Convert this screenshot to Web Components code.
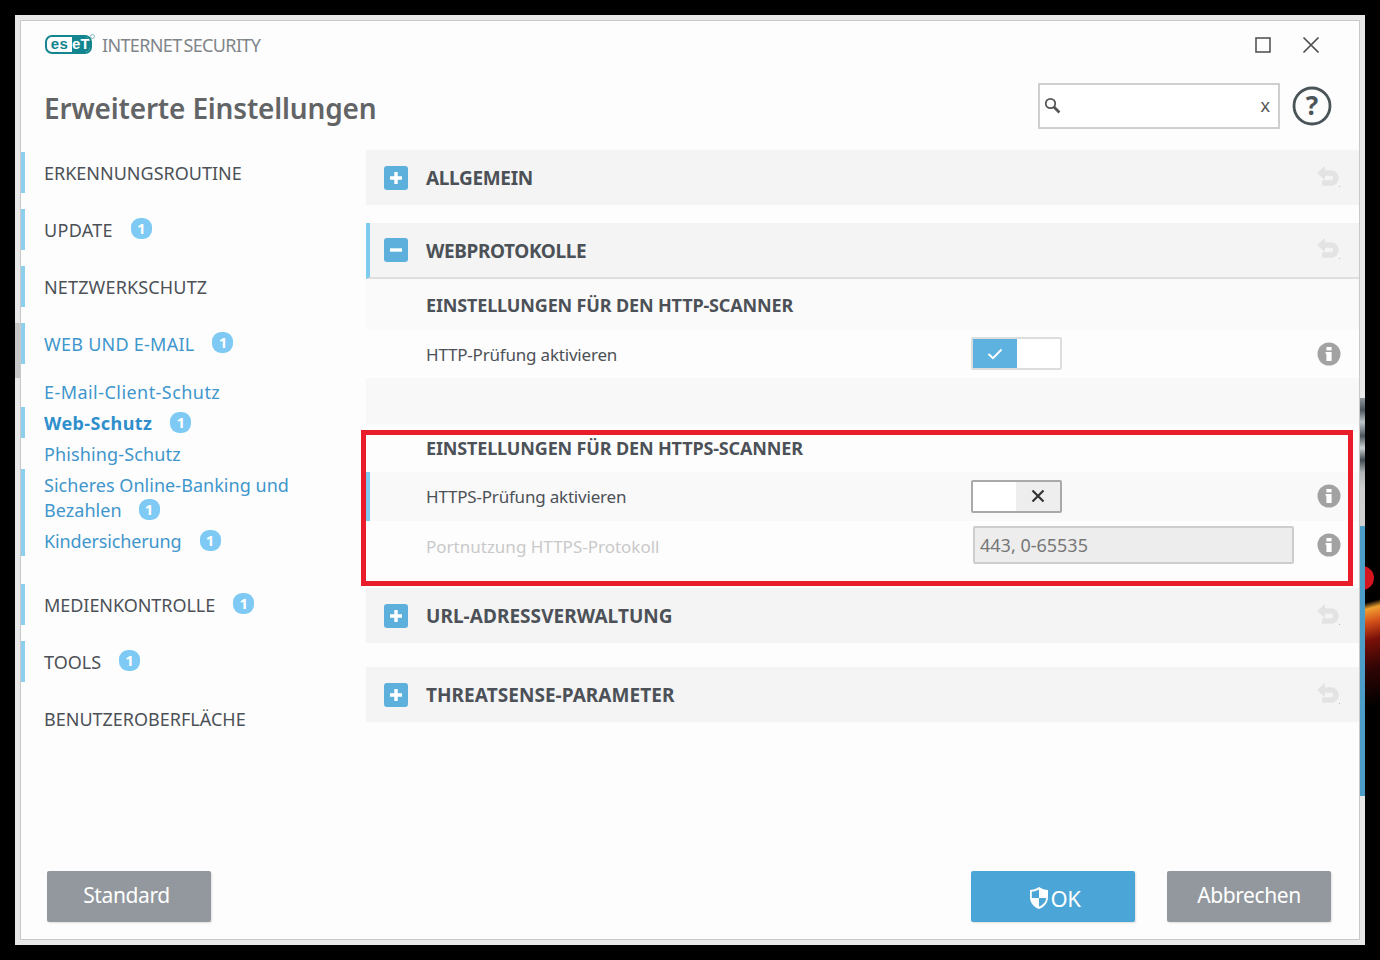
<!DOCTYPE html>
<html lang="de">
<head>
<meta charset="utf-8">
<title>ESET Internet Security</title>
<style>
  html, body { margin: 0; padding: 0; background: #000; }
  body { font-family: "Noto Sans", "Open Sans", sans-serif; }
</style>
</head>
<body>
<app-screen>
  <eset-window>
    <title-bar slot="top"></title-bar>
    <page-head slot="top">Erweiterte Einstellungen</page-head>

    <side-nav slot="nav">
      <nav-item marked>ERKENNUNGSROUTINE</nav-item>
      <nav-item marked count="1" style="letter-spacing:.3px">UPDATE</nav-item>
      <nav-item marked style="letter-spacing:.15px">NETZWERKSCHUTZ</nav-item>
      <nav-item marked active count="1" style="letter-spacing:.25px">WEB UND E-MAIL</nav-item>
      <sub-list>
        <sub-item style="letter-spacing:.45px">E-Mail-Client-Schutz</sub-item>
        <sub-item marked current count="1" style="letter-spacing:.4px">Web-Schutz</sub-item>
        <sub-item style="letter-spacing:.13px">Phishing-Schutz</sub-item>
        <sub-item marked count="1" class="wrap" style="letter-spacing:.04px">Sicheres Online-Banking und<br>Bezahlen</sub-item>
        <sub-item marked count="1" style="letter-spacing:-.13px">Kindersicherung</sub-item>
      </sub-list>
      <nav-item marked count="1" style="letter-spacing:-.05px">MEDIENKONTROLLE</nav-item>
      <nav-item marked count="1">TOOLS</nav-item>
      <nav-item>BENUTZEROBERFLÄCHE</nav-item>
    </side-nav>

    <settings-pane slot="pane">
      <section-bar style="letter-spacing:-.33px">ALLGEMEIN</section-bar>
      <section-bar open style="letter-spacing:-.38px">WEBPROTOKOLLE</section-bar>
      <group-title size="51" tone="#fafafa">EINSTELLUNGEN FÜR DEN HTTP-SCANNER</group-title>
      <setting-row height="48" tone="#fdfdfd" info style="letter-spacing:-.2px">
        HTTP-Prüfung aktivieren
        <toggle-switch slot="control" on></toggle-switch>
      </setting-row>
      <setting-row height="46" tone="#f8f8f8"></setting-row>
      <group-title size="48" tone="#fdfdfd">EINSTELLUNGEN FÜR DEN HTTPS-SCANNER</group-title>
      <setting-row height="49" tone="#f9f9f9" marked info style="letter-spacing:-.2px">
        HTTPS-Prüfung aktivieren
        <toggle-switch slot="control"></toggle-switch>
      </setting-row>
      <setting-row height="49" tone="#fdfdfd" disabled info>
        Portnutzung HTTPS-Protokoll
        <port-field slot="control">443, 0-65535</port-field>
      </setting-row>
      <section-bar class="after-frame" style="letter-spacing:.05px">URL-ADRESSVERWALTUNG</section-bar>
      <section-bar style="letter-spacing:.05px">THREATSENSE-PARAMETER</section-bar>
      <red-frame></red-frame>
    </settings-pane>

    <action-button slot="left" tone="grey" style="padding-right:5px">Standard</action-button>
    <action-button slot="right" tone="blue" shield>OK</action-button>
    <action-button slot="right" tone="grey">Abbrechen</action-button>
  </eset-window>
</app-screen>

<script>
  function attach(el, html) {
    const root = el.attachShadow({ mode: 'open' });
    root.innerHTML = html;
    return root;
  }

  class AppScreen extends HTMLElement {
    constructor() {
      super();
      attach(this, `
        <style>
          :host { display: block; position: relative; width: 1380px; height: 960px; padding: 15px; box-sizing: border-box; background: #000; overflow: hidden; }
          .shell { width: 1350px; height: 930px; box-sizing: border-box; padding: 5px; background: #e8e8e8; }
          /* bits of the desktop that show around the window */
          .bit { position: absolute; }
          .left { left: 15px; top: 323px; width: 5px; height: 55px; background: #c6c6c6; }
          .photo { left: 1360px; top: 398px; width: 5px; height: 128px;
            background: linear-gradient(#8f979c 0, #4a545b 12px, #bfc6ca 24px, #4a545b 38px, #cdd2d5 50px, #3f4a50 62px, #aeb3b6 74px, #cfcfcf 90px, #d2d2d2 100%); }
          .blue { left: 1360px; top: 526px; width: 5px; height: 270px; background: #4c9dc8; }
          .dot { left: 1350px; top: 566px; width: 24px; height: 24px; border-radius: 50%; background: #d3151e; clip-path: inset(0 0 0 15px); }
          .glow { left: 1365px; top: 596px; width: 15px; height: 110px;
            background: linear-gradient(165deg, #000 0, #000 6%, #f0a030 12%, #d4501a 24%, #7a0f08 40%, #300504 65%, #000 100%); }
        </style>
        <div class="shell"><slot></slot></div>
        <i class="bit left"></i><i class="bit photo"></i><i class="bit blue"></i><i class="bit dot"></i><i class="bit glow"></i>`);
    }
  }

  class EsetWindow extends HTMLElement {
    constructor() {
      super();
      attach(this, `
        <style>
          :host { display: flex; flex-direction: column; height: 100%; box-sizing: border-box; border: 1px solid #c9c9c9; background: #fdfdfd; color: #4c5157; }
          .top { height: 129px; display: block; flex: none; }
          .main { display: flex; height: 721px; flex: none; }
          .foot { display: flex; justify-content: space-between; padding: 0 28px 0 26px; }
          .right { display: flex; gap: 32px; }
        </style>
        <div class="top"><slot name="top"></slot></div>
        <div class="main"><slot name="nav"></slot><slot name="pane"></slot></div>
        <div class="foot">
          <div><slot name="left"></slot></div>
          <div class="right"><slot name="right"></slot></div>
        </div>`);
    }
  }

  class TitleBar extends HTMLElement {
    constructor() {
      super();
      attach(this, `
        <style>
          :host { display: flex; align-items: center; height: 48px; padding: 0 39px 0 24px; box-sizing: border-box; }
          .logo { display: flex; width: 47px; height: 19px; box-sizing: border-box; border: 2.5px solid #12858f; border-radius: 7px; overflow: hidden; font: bold 15px/13px "Liberation Sans", sans-serif; margin-top: -1px; }
          .logo b { display: block; text-align: center; letter-spacing: .3px; }
          .es { width: 25px; color: #12858f; }
          .et { flex: 1; background: #12858f; color: #fff; }
          .reg { width: 3px; height: 3px; border: 1px solid #7fb9be; border-radius: 50%; margin: -18px 0 0 -2px; }
          .name { margin-left: 7px; font-size: 18px; letter-spacing: -.65px; word-spacing: -2px; color: #808589; line-height: 24px; }
          .spacer { flex: 1; }
          svg { display: block; }
          .close { margin-left: 31px; }
        </style>
        <div class="logo"><b class="es">es</b><b class="et">eT</b></div><i class="reg"></i>
        <span class="name">INTERNET SECURITY</span>
        <span class="spacer"></span>
        <svg width="16" height="16" viewBox="0 0 16 16"><rect x="1" y="1" width="14" height="14" fill="none" stroke="#555" stroke-width="1.6"/></svg>
        <svg class="close" width="18" height="18" viewBox="0 0 18 18"><path d="M1.5 1.500l15 15M16.500 1.500l-15 15" fill="none" stroke="#4f4f4f" stroke-width="1.7"/></svg>`);
    }
  }

  class PageHead extends HTMLElement {
    constructor() {
      super();
      attach(this, `
        <style>
          :host { display: flex; align-items: center; height: 81px; padding: 0 27px 8px 23px; box-sizing: border-box; }
          h1 { flex: 1; margin: 4px 0 0 0; font-size: 28px; line-height: 38px; font-weight: 600; letter-spacing: -.17px; color: #626466; }
          .search { display: flex; align-items: center; justify-content: space-between; width: 242px; height: 46px; box-sizing: border-box; border: 2px solid #cfcfcf; background: #fff; padding: 0 8px 0 4px; }
          .help { margin-left: 12px; }
          svg { display: block; }
          .clear { font: 19px/20px "Liberation Sans", sans-serif; color: #555; }
        </style>
        <h1><slot></slot></h1>
        <div class="search">
          <svg width="17" height="17" viewBox="0 0 17 17"><circle cx="6.500" cy="6.500" r="4.700" fill="none" stroke="#555" stroke-width="1.800"/><path d="M10 10l5.400 5.400" stroke="#555" stroke-width="2.800"/></svg>
          <span class="clear">x</span>
        </div>
        <svg class="help" width="40" height="40" viewBox="0 0 40 40">
          <circle cx="20" cy="20" r="18" fill="none" stroke="#4a5459" stroke-width="2.800"/>
          <text x="20" y="29" text-anchor="middle" font-family="Noto Sans, sans-serif" font-size="26" font-weight="700" fill="#4a5459">?</text>
        </svg>`);
    }
  }

  class SideNav extends HTMLElement {
    constructor() {
      super();
      attach(this, `
        <style>
          :host { display: flex; flex-direction: column; gap: 16px; width: 345px; flex: none; padding-top: 2px; box-sizing: border-box; }
        </style>
        <slot></slot>`);
    }
  }

  class CountBadge extends HTMLElement {
    constructor() {
      super();
      attach(this, `
        <style>
          :host { display: inline-flex; align-items: center; justify-content: center; width: 21px; height: 21px; border-radius: 9px; background: #7fcaf4; color: #fff; font-size: 15px; font-weight: 700; line-height: 21px; letter-spacing: 0; }
        </style>
        <slot></slot>`);
    }
  }
  customElements.define('count-badge', CountBadge);

  const badge = el => el.hasAttribute('count') ? `<count-badge>${el.getAttribute('count')}</count-badge>` : '';

  class NavItem extends HTMLElement {
    connectedCallback() {
      if (this.shadowRoot) return;
      const colour = this.hasAttribute('active') ? '#3f96cc' : '#4c5157';
      attach(this, `
        <style>
          :host { display: flex; align-items: center; height: 41px; box-sizing: border-box; padding-left: 19px; border-left: 4px solid transparent; font-size: 18px; color: ${colour}; }
          :host([marked]) { border-left-color: #8dcfec; }
          count-badge { margin: -3px 0 0 18px; }
        </style>
        <slot></slot>${badge(this)}`);
    }
  }

  class SubList extends HTMLElement {
    constructor() {
      super();
      attach(this, `
        <style>
          :host { display: flex; flex-direction: column; margin: -4px 0 12px; }
        </style>
        <slot></slot>`);
    }
  }

  class SubItem extends HTMLElement {
    connectedCallback() {
      if (this.shadowRoot) return;
      attach(this, `
        <style>
          :host { display: flex; align-items: center; min-height: 31px; box-sizing: border-box; padding-left: 19px; padding-top: 2px; border-left: 4px solid transparent; font-size: 18px; line-height: 25px; color: #3f96cc; }
          :host([marked]) { border-left-color: #8dcfec; }
          :host([current]) { font-weight: 700; color: #2f8fcc; }
          :host(.wrap) { display: block; padding-top: 4px; padding-bottom: 2px; height: 56px; }
          :host(.wrap) count-badge { margin-left: 17px; vertical-align: 2px; }
          count-badge { margin-left: 18px; margin-top: -3px; }
        </style>
        <slot></slot>${badge(this)}`);
    }
  }

  class SettingsPane extends HTMLElement {
    constructor() {
      super();
      attach(this, `
        <style>
          :host { display: flex; flex-direction: column; position: relative; width: 993px; flex: none; }
        </style>
        <slot></slot>`);
    }
  }

  const undoIcon = `<svg class="undo" width="24" height="22" viewBox="0 0 24 22"><path d="M6 7h8a5 5 0 0 1 0 10H5" fill="none" stroke="#e3e3e3" stroke-width="5.500"/><path d="M0 7l8-7v14z" fill="#e3e3e3"/><rect x="22" y="20" width="1" height="1" fill="#bbb"/></svg>`;

  class SectionBar extends HTMLElement {
    connectedCallback() {
      if (this.shadowRoot) return;
      const open = this.hasAttribute('open');
      const mark = open ? 'M6 12h12' : 'M6 12h12M12 6v12';
      attach(this, `
        <style>
          :host { display: flex; align-items: center; height: 55px; box-sizing: border-box; padding: 0 18px 0 18px; background: #f4f4f4; font-size: 19px; font-weight: 700; color: #4c5157; margin-bottom: 18px; }
          :host([open]) { height: 56px; padding-left: 14px; border-left: 4px solid #7dcbee; border-bottom: 2px solid #dedede; margin-bottom: 0; }
          :host([open]) span { margin-top: 1px; }
          :host(.after-frame) { margin-top: 18px; margin-bottom: 24px; }
          .box { display: block; margin-right: 18px; flex: none; }
          span { flex: 1; }
          .undo { display: block; margin-top: -2px; }
        </style>
        <svg class="box" width="24" height="24" viewBox="0 0 24 24"><rect width="24" height="24" rx="3" fill="#5db0dc"/><path d="${mark}" stroke="#fff" stroke-width="3.400" fill="none"/></svg>
        <span><slot></slot></span>${undoIcon}`);
    }
  }

  class GroupTitle extends HTMLElement {
    connectedCallback() {
      if (this.shadowRoot) return;
      attach(this, `
        <style>
          :host { display: flex; align-items: center; height: ${this.getAttribute('size')}px; padding-left: 60px; background: ${this.getAttribute('tone')}; font-size: 18px; font-weight: 700; letter-spacing: -.15px; color: #4c5157; }
        </style>
        <slot></slot>`);
    }
  }

  class SettingRow extends HTMLElement {
    connectedCallback() {
      if (this.shadowRoot) return;
      const info = this.hasAttribute('info') ? `
        <svg class="info" width="24" height="24" viewBox="0 0 24 24"><circle cx="12" cy="12" r="11.500" fill="#a2a2a2"/><rect x="9.400" y="10" width="5.200" height="9" fill="#fff"/><rect x="8.600" y="10" width="2" height="1.800" fill="#fff"/><rect x="9.400" y="5" width="5.200" height="3.400" fill="#fff"/></svg>` : '';
      attach(this, `
        <style>
          :host { display: flex; align-items: center; height: ${this.getAttribute('height')}px; box-sizing: border-box; padding: 0 18px 0 60px; background: ${this.getAttribute('tone')}; font-size: 17px; color: #4c5157; }
          :host([marked]) { padding-left: 56px; border-left: 4px solid #7dcbee; }
          :host([disabled]) { color: #c9c9c9; }
          :host([disabled]) .label { margin-top: 2px; }
          .label { width: 545px; flex: none; }
          .control { flex: 1; display: flex; }
          .info { display: block; flex: none; margin-top: -1px; }
        </style>
        <span class="label"><slot></slot></span>
        <span class="control"><slot name="control"></slot></span>${info}`);
    }
  }

  class ToggleSwitch extends HTMLElement {
    connectedCallback() {
      if (this.shadowRoot) return;
      attach(this, `
        <style>
          :host { display: flex; width: 91px; height: 33px; box-sizing: border-box; border: 2px solid #a9a9a9; border-radius: 2px; background: #fff; margin-top: -1px; }
          :host([on]) { border-color: #dddddd; }
          i { display: flex; align-items: center; justify-content: center; width: 44px; height: 100%; }
          .off { margin-left: auto; background: #eeeeee; }
          .yes { background: #5db2df; }
          svg { display: block; }
        </style>
        ${this.hasAttribute('on')
          ? `<i class="yes"><svg width="16" height="12" viewBox="0 0 16 12"><path d="M1.500 6l4.500 4.200L14.500 1.500" fill="none" stroke="#fff" stroke-width="2"/></svg></i>`
          : `<i class="off"><svg width="14" height="14" viewBox="0 0 14 14"><path d="M1.500 1.500l11 11M12.500 1.500l-11 11" fill="none" stroke="#333" stroke-width="2.200"/></svg></i>`}`);
    }
  }

  class PortField extends HTMLElement {
    constructor() {
      super();
      attach(this, `
        <style>
          :host { display: flex; align-items: center; width: 321px; height: 38px; box-sizing: border-box; margin: -2px 0 0 2px; padding-left: 5px; border: 2px solid #cdcdcd; border-radius: 2px; background: #ededed; color: #777; font-size: 18px; }
        </style>
        <slot></slot>`);
    }
  }

  class RedFrame extends HTMLElement {
    constructor() {
      super();
      attach(this, `
        <style>
          :host { display: block; position: absolute; left: -5px; top: 280px; width: 992px; height: 156px; box-sizing: border-box; border: 5px solid #e81c2b; pointer-events: none; }
        </style>`);
    }
  }

  class ActionButton extends HTMLElement {
    connectedCallback() {
      if (this.shadowRoot) return;
      const shield = this.hasAttribute('shield') ? `
        <svg width="20" height="24" viewBox="0 0 20 24"><path d="M10 1c3 2 6 3 9 3v7c0 6-4 10-9 12C5 21 1 17 1 11V4c3 0 6-1 9-3z" fill="#fff"/><path d="M10 3.400V12H2.800c0-.4 0-.7 0-1V5.600c2.600-.2 5-1 7.200-2.200zM10 12h7.200c-.5 4.200-3.300 7-7.200 8.800z" fill="#4ba5d6"/></svg>` : '';
      attach(this, `
        <style>
          :host { display: inline-flex; align-items: center; justify-content: center; width: 164px; height: 51px; box-sizing: border-box; border-radius: 2px; color: #fff; font-size: 21px; letter-spacing: -.4px; background: #92989d; box-shadow: 1px 1px 2px rgba(0,0,0,.12); }
          :host([tone="blue"]) { background: #4ba5d6; font-size: 22px; padding-left: 4px; }
          :host([tone="blue"]) span { margin: 2px 0 0 1px; }
          svg { display: block; margin-top: 2px; }
          span { line-height: 30px; margin-bottom: 4px; }
        </style>
        ${shield}<span><slot></slot></span>`);
    }
  }

  customElements.define('app-screen', AppScreen);
  customElements.define('eset-window', EsetWindow);
  customElements.define('title-bar', TitleBar);
  customElements.define('page-head', PageHead);
  customElements.define('side-nav', SideNav);
  customElements.define('nav-item', NavItem);
  customElements.define('sub-list', SubList);
  customElements.define('sub-item', SubItem);
  customElements.define('settings-pane', SettingsPane);
  customElements.define('section-bar', SectionBar);
  customElements.define('group-title', GroupTitle);
  customElements.define('setting-row', SettingRow);
  customElements.define('toggle-switch', ToggleSwitch);
  customElements.define('port-field', PortField);
  customElements.define('red-frame', RedFrame);
  customElements.define('action-button', ActionButton);
</script>
</body>
</html>
